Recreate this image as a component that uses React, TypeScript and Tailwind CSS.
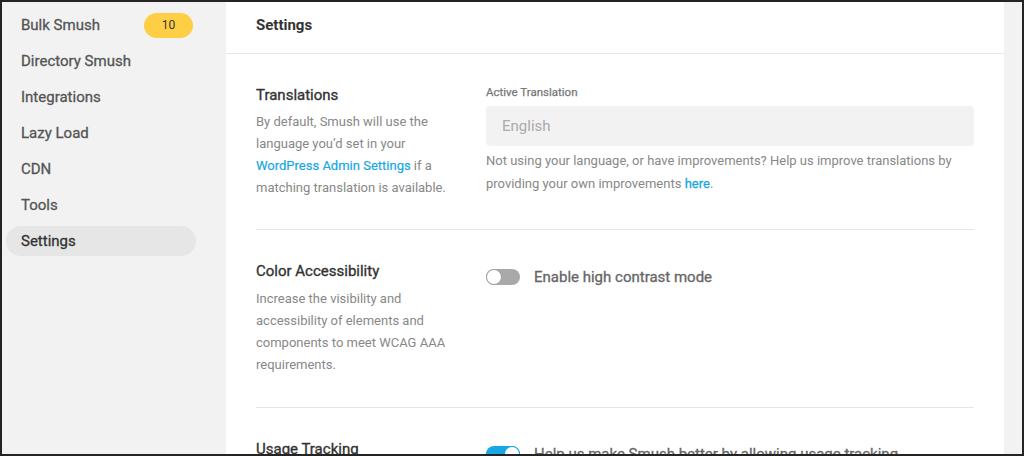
const navItems = [
  { label: "Bulk Smush", badge: "10" },
  { label: "Directory Smush" },
  { label: "Integrations" },
  { label: "Lazy Load" },
  { label: "CDN" },
  { label: "Tools" },
  { label: "Settings", active: true },
];

function Toggle({ on }: { on?: boolean }) {
  return (
    <span
      className={`relative inline-flex h-[16px] w-[34px] shrink-0 rounded-full ${
        on ? "bg-[#17a8e3]" : "bg-[#a9a9a9]"
      }`}
    >
      <span
        className={`absolute top-0 h-[16px] w-[16px] rounded-full bg-white border ${
          on ? "right-0 border-[#17a8e3]" : "left-0 border-[#a0a0a0]"
        }`}
      />
    </span>
  );
}

export default function App() {
  return (
    <div
      className="w-[1024px] h-[456px] overflow-hidden border-2 border-[#242424] flex bg-[#f2f2f2]"
      style={{ fontFamily: "Roboto, 'Noto Sans', sans-serif" }}
    >
      {/* Sidebar */}
      <aside className="w-[224px] shrink-0 bg-[#f2f2f2] pt-[8px] flex flex-col gap-[6px]">
        {navItems.map((item) => (
          <div
            key={item.label}
            className={`ml-[4px] w-[190px] h-[30px] rounded-full pl-[15px] pr-[3px] flex items-center justify-between text-[15px] ${
              item.active ? "bg-[#e6e6e6] text-[#333333]" : "text-[#555555]"
            }`}
          >
            <span className="[-webkit-text-stroke:0.3px_currentColor]">{item.label}</span>
            {item.badge && (
              <span className="h-[25px] w-[49px] rounded-full bg-[#fecf45] text-[#333333] text-[12px] flex items-center justify-center">
                {item.badge}
              </span>
            )}
          </div>
        ))}
      </aside>

      {/* Main panel */}
      <main className="flex-1 bg-white flex flex-col">
        <div className="h-[52px] shrink-0 border-b border-[#e6e6e6] pl-[30px] flex items-center pb-[4px]">
          <h1 className="text-[15px] font-bold text-[#333333]">Settings</h1>
        </div>

        <div className="px-[30px]">
          {/* Translations */}
          <section className="grid grid-cols-[200px_1fr] gap-x-[30px] pt-[30px] pb-[30px] border-b border-[#e6e6e6]">
            <div>
              <h2 className="text-[15px] leading-[22px] text-[#333333] [-webkit-text-stroke:0.35px_currentColor]">
                Translations
              </h2>
              <p className="mt-[5px] text-[13px] leading-[22px] text-[#888888]">
                By default, Smush will use the language you’d set in your{" "}
                <span className="text-[#17a8e3] [-webkit-text-stroke:0.2px_currentColor]">WordPress Admin Settings</span> if a
                matching translation is available.
              </p>
            </div>
            <div>
              <label className="block text-[11.5px] leading-[16px] text-[#777777] [-webkit-text-stroke:0.25px_currentColor]">
                Active Translation
              </label>
              <div className="mt-[6px] h-[40px] rounded-[4px] bg-[#f2f2f2] flex items-center pl-[16px] text-[15px] text-[#aaaaaa]">
                English
              </div>
              <p className="mt-[3px] text-[13px] leading-[23px] text-[#888888]">
                Not using your language, or have improvements? Help us improve translations by
                <br />
                providing your own improvements{" "}
                <span className="text-[#17a8e3] [-webkit-text-stroke:0.3px_currentColor]">here</span>.
              </p>
            </div>
          </section>

          {/* Color Accessibility */}
          <section className="grid grid-cols-[200px_1fr] gap-x-[30px] pt-[30px] pb-[31px] border-b border-[#e6e6e6]">
            <div>
              <h2 className="text-[15px] leading-[22px] text-[#333333] [-webkit-text-stroke:0.35px_currentColor]">
                Color Accessibility
              </h2>
              <p className="mt-[6px] text-[13px] leading-[22px] text-[#888888]">
                Increase the visibility and accessibility of elements and components to meet WCAG AAA
                requirements.
              </p>
            </div>
            <div className="flex items-center gap-[14px] h-[22px] mt-[6px]">
              <Toggle />
              <span className="text-[15px] text-[#666666] [-webkit-text-stroke:0.3px_currentColor]">
                Enable high contrast mode
              </span>
            </div>
          </section>

          {/* Usage Tracking */}
          <section className="grid grid-cols-[200px_1fr] gap-x-[30px] pt-[30px]">
            <div>
              <h2 className="text-[15px] leading-[22px] text-[#333333] [-webkit-text-stroke:0.35px_currentColor]">
                Usage Tracking
              </h2>
            </div>
            <div className="flex items-center gap-[14px] h-[22px] mt-[5px]">
              <Toggle on />
              <span className="text-[15px] text-[#666666] [-webkit-text-stroke:0.3px_currentColor]">
                Help us make Smush better by allowing usage tracking
              </span>
            </div>
          </section>
        </div>
      </main>

      {/* Right gutter */}
      <div className="w-[18px] shrink-0 bg-[#f2f2f2]" />
    </div>
  );
}
